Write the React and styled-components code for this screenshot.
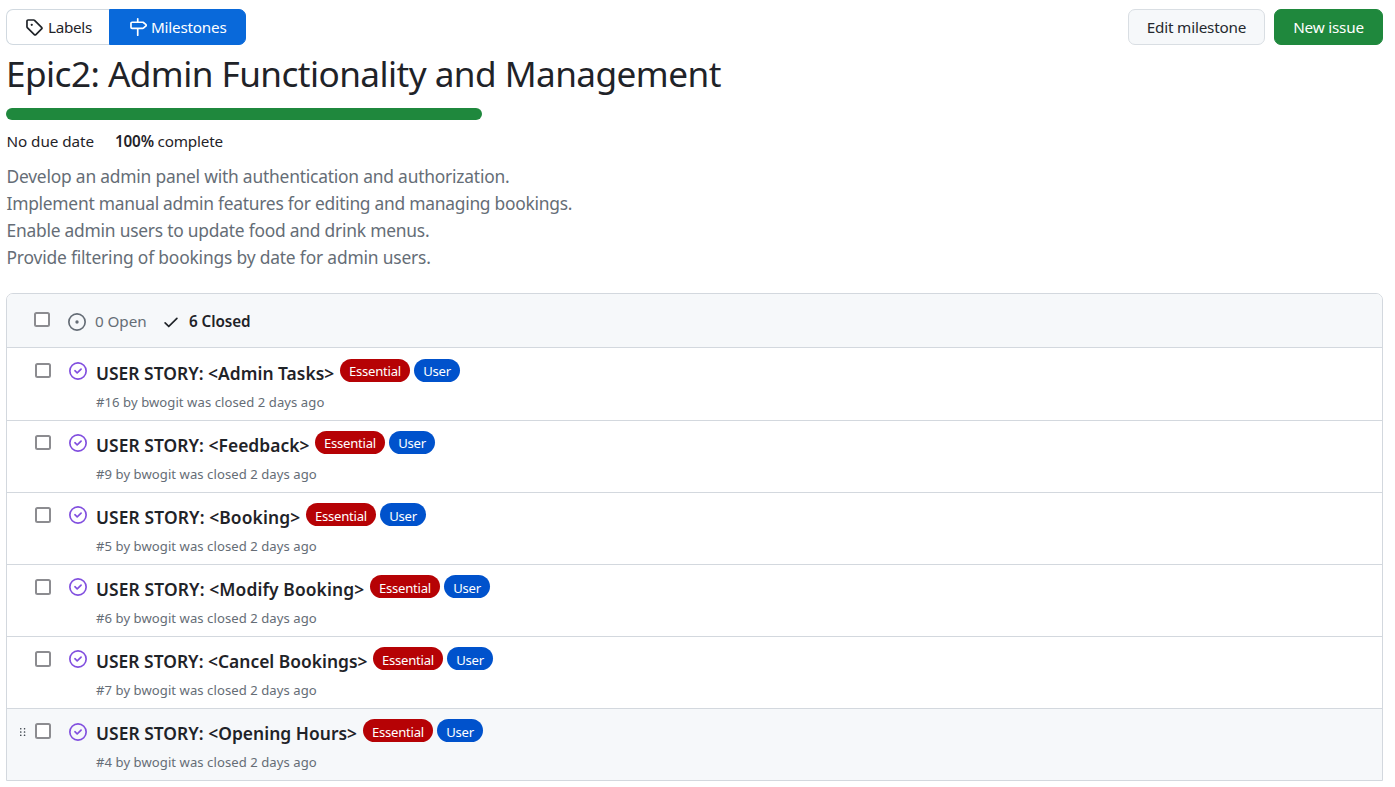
import React from 'react';
import styled, { createGlobalStyle } from 'styled-components';

const GlobalStyle = createGlobalStyle`
  *, *::before, *::after { box-sizing: border-box; }
  body {
    margin: 0;
    background: #ffffff;
    color: #1f2328;
    font-family: "Segoe UI", "Noto Sans", sans-serif;
    font-size: 15.25px;
    line-height: 24px;
  }
  h1, p { margin: 0; font-weight: 400; }
`;

const Page = styled.main`
  width: 1395px;
  height: 787px;
  padding: 9px 12px 0 6px;
  overflow: hidden;
`;

const Toolbar = styled.div`
  display: flex;
  justify-content: space-between;
  height: 36px;
`;

const SubNav = styled.nav`
  display: flex;
`;

const NavItem = styled.a`
  display: flex;
  align-items: center;
  gap: ${(p) => (p.$selected ? '4px' : '5px')};
  width: ${(p) => (p.$selected ? '137px' : '103px')};
  padding-left: ${(p) => (p.$selected ? '19px' : '18px')};
  border: 1px solid ${(p) => (p.$selected ? '#0969da' : '#d1d9e0')};
  border-right-width: ${(p) => (p.$selected ? '1px' : '0')};
  border-radius: ${(p) => (p.$selected ? '0 7px 7px 0' : '7px 0 0 7px')};
  background: ${(p) => (p.$selected ? '#0969da' : '#ffffff')};
  color: ${(p) => (p.$selected ? '#ffffff' : '#1f2328')};
  letter-spacing: ${(p) => p.$tracking}px;
  white-space: nowrap;
`;

const Actions = styled.div`
  display: flex;
  gap: 9px;
`;

const Button = styled.button`
  width: ${(p) => (p.$primary ? '109px' : '137px')};
  padding: 0;
  border: 1px solid ${(p) => (p.$primary ? '#1f883d' : '#d9dee3')};
  border-radius: 7px;
  background: ${(p) => (p.$primary ? '#1f883d' : '#f6f8fa')};
  color: ${(p) => (p.$primary ? '#ffffff' : '#25292e')};
  font: inherit;
  letter-spacing: ${(p) => p.$tracking}px;
  white-space: nowrap;
`;

const Title = styled.h1`
  height: 63px;
  padding-top: 3px;
  font-size: 35.2px;
  line-height: 50px;
  letter-spacing: -0.57px;
  white-space: nowrap;
`;

const Progress = styled.div`
  width: 476px;
  height: 12px;
  border-radius: 6px;
  background: #1f883d;
`;

const Stats = styled.div`
  display: flex;
  height: 43px;
  padding-top: 9px;
`;

const DueDate = styled.span`
  width: 109px;
  padding-left: 0.5px;
  letter-spacing: -0.06px;
`;

const Complete = styled.span`
  letter-spacing: -0.18px;
  b { font-weight: 600; }
`;

const Description = styled.div`
  height: 130px;
  padding-left: 0.5px;
  color: #656d76;
  font-size: 17.4px;
  line-height: 27px;
`;

const DescriptionLine = styled.p`
  letter-spacing: ${(p) => p.$tracking}px;
  white-space: nowrap;
`;

const IssueBox = styled.section`
  border: 1px solid #d3d8de;
  border-radius: 7px 7px 0 0;
  overflow: hidden;
`;

const BoxHeader = styled.header`
  display: flex;
  height: 54px;
  padding: 0 0 0 27px;
  border-bottom: 1px solid #d3d8de;
  background: #f6f8fa;
`;

const Checkbox = styled.span`
  flex: none;
  width: 16px;
  height: ${(p) => (p.$tall ? 16 : 15)}px;
  margin-top: ${(p) => p.$top}px;
  border: 2px solid #8c8c90;
  border-radius: 2.5px;
  background: #ffffff;
`;

const StateFilter = styled.a`
  display: flex;
  align-items: center;
  gap: 9px;
  margin-left: 18px;
  padding-top: 2px;
  color: ${(p) => (p.$selected ? '#1f2328' : '#656d76')};
  font-weight: ${(p) => (p.$selected ? 600 : 400)};
  letter-spacing: ${(p) => p.$tracking}px;
  width: ${(p) => (p.$selected ? 'auto' : '76px')};
  white-space: nowrap;
`;

const FilterText = styled.span`
  padding-bottom: 2px;
`;

const Row = styled.article`
  display: flex;
  height: ${(p) => (p.$first ? 73 : p.$last ? 71 : 72)}px;
  padding-left: 12px;
  border-bottom: ${(p) => (p.$last ? '0' : '1px solid #d3d8de')};
  background: ${(p) => (p.$active ? '#f6f8fa' : '#ffffff')};
`;

const Handle = styled.span`
  flex: none;
  display: flex;
  width: 16px;
  padding: 19px 0 0 1px;
  color: #454c54;
`;

const StateIcon = styled.span`
  flex: none;
  display: flex;
  width: 45px;
  padding: ${(p) => p.$top}px 0 0 18px;
  color: #8250df;
`;

const IssueBody = styled.div`
  padding-top: ${(p) => (p.$first ? 11 : 10)}px;
`;

const TitleLine = styled.div`
  display: flex;
  height: 31px;
`;

const IssueTitle = styled.a`
  width: ${(p) => p.$width}px;
  padding-top: 1px;
  font-size: 17.4px;
  font-weight: 600;
  line-height: 27px;
  letter-spacing: ${(p) => p.$tracking}px;
  white-space: nowrap;
`;

const Label = styled.span`
  width: ${(p) => (p.$kind === 'essential' ? 70 : 46)}px;
  height: 23px;
  margin-right: 4px;
  border-radius: 12px;
  background: ${(p) => (p.$kind === 'essential' ? '#b60205' : '#0052cc')};
  color: #ffffff;
  font-size: 13.1px;
  line-height: ${(p) => (p.$low ? 26 : 24)}px;
  letter-spacing: -0.25px;
  text-align: center;
`;

const IssueMeta = styled.div`
  color: #656d76;
  font-size: 13.1px;
  line-height: 24px;
  letter-spacing: 0.06px;
  white-space: nowrap;
`;

const paths = {
  tag: 'M1 7.775V2.75C1 1.784 1.784 1 2.75 1h5.025c.464 0 .91.184 1.238.513l6.25 6.25a1.75 1.75 0 0 1 0 2.474l-5.026 5.026a1.75 1.75 0 0 1-2.474 0l-6.25-6.25A1.752 1.752 0 0 1 1 7.775Zm1.5 0c0 .066.026.13.073.177l6.25 6.25a.25.25 0 0 0 .354 0l5.025-5.025a.25.25 0 0 0 0-.354l-6.25-6.25a.25.25 0 0 0-.177-.073H2.75a.25.25 0 0 0-.25.25ZM6 5a1 1 0 1 1 0 2 1 1 0 0 1 0-2Z',
  milestone: 'M7.75 0a.75.75 0 0 1 .75.75V3h3.634c.414 0 .814.147 1.13.414l2.07 1.75a1.75 1.75 0 0 1 0 2.672l-2.07 1.75a1.75 1.75 0 0 1-1.13.414H8.5v5.25a.75.75 0 0 1-1.5 0V10H2.75A1.75 1.75 0 0 1 1 8.25v-3.5C1 3.784 1.784 3 2.75 3H7V.75A.75.75 0 0 1 7.75 0Zm4.384 8.5a.25.25 0 0 0 .161-.06l2.07-1.75a.248.248 0 0 0 0-.38l-2.07-1.75a.25.25 0 0 0-.161-.06H2.75a.25.25 0 0 0-.25.25v3.5c0 .138.112.25.25.25h9.384Z',
  open: 'M8 9.5a1.5 1.5 0 1 0 0-3 1.5 1.5 0 0 0 0 3ZM8 0a8 8 0 1 1 0 16A8 8 0 0 1 8 0ZM1.5 8a6.5 6.5 0 1 0 13 0 6.5 6.5 0 0 0-13 0Z',
  closed: 'M11.28 6.78a.75.75 0 0 0-1.06-1.06L7.25 8.69 5.78 7.22a.75.75 0 0 0-1.06 1.06l2 2a.75.75 0 0 0 1.06 0l3.5-3.5ZM16 8A8 8 0 1 1 0 8a8 8 0 0 1 16 0Zm-1.5 0a6.5 6.5 0 1 0-13 0 6.5 6.5 0 0 0 13 0Z',
  check: 'M13.78 4.22a.75.75 0 0 1 0 1.06l-7.25 7.25a.75.75 0 0 1-1.06 0L2.22 9.28a.751.751 0 0 1 .018-1.042.751.751 0 0 1 1.042-.018L6 10.94l6.72-6.72a.75.75 0 0 1 1.06 0Z',
};

const IconSvg = styled.svg`
  flex: none;
  fill: currentColor;
`;

const Icon = ({ name }) => (
  <IconSvg width="18" height="18" viewBox="0 0 16 16">
    <path d={paths[name]} />
  </IconSvg>
);

const Grip = () => (
  <IconSvg width="6" height="9" viewBox="0 0 6 9">
    {[0, 3.3, 6.6].map((y) => (
      <React.Fragment key={y}>
        <rect x="0" y={y} width="1.5" height="1.5" rx=".4" />
        <rect x="3.8" y={y} width="1.5" height="1.5" rx=".4" />
      </React.Fragment>
    ))}
  </IconSvg>
);

const description = [
  { text: 'Develop an admin panel with authentication and authorization.', tracking: -0.21 },
  { text: 'Implement manual admin features for editing and managing bookings.', tracking: -0.26 },
  { text: 'Enable admin users to update food and drink menus.', tracking: -0.23 },
  { text: 'Provide filtering of bookings by date for admin users.', tracking: -0.18 },
];

const issues = [
  { id: 16, name: 'Admin Tasks', width: 244, tracking: 0.03 },
  { id: 9, name: 'Feedback', width: 219, tracking: 0.06 },
  { id: 5, name: 'Booking', width: 210, tracking: 0.12 },
  { id: 6, name: 'Modify Booking', width: 274, tracking: 0.12 },
  { id: 7, name: 'Cancel Bookings', width: 277, tracking: 0.02 },
  { id: 4, name: 'Opening Hours', width: 267, tracking: 0.04, active: true },
];

export default function App() {
  return (
    <>
      <GlobalStyle />
      <Page>
        <Toolbar>
          <SubNav>
            <NavItem $tracking={-0.3}><Icon name="tag" />Labels</NavItem>
            <NavItem $selected $tracking={-0.22}><Icon name="milestone" />Milestones</NavItem>
          </SubNav>
          <Actions>
            <Button $tracking={-0.18}>Edit milestone</Button>
            <Button $primary $tracking={-0.2}>New issue</Button>
          </Actions>
        </Toolbar>
        <Title>Epic2: Admin Functionality and Management</Title>
        <Progress />
        <Stats>
          <DueDate>No due date</DueDate>
          <Complete><b>100%</b> complete</Complete>
        </Stats>
        <Description>
          {description.map((line) => (
            <DescriptionLine key={line.text} $tracking={line.tracking}>{line.text}</DescriptionLine>
          ))}
        </Description>
        <IssueBox>
          <BoxHeader>
            <Checkbox $top={18} />
            <StateFilter $tracking={-0.08}><Icon name="open" /><FilterText>0 Open</FilterText></StateFilter>
            <StateFilter $selected $tracking={-0.08}><Icon name="check" /><FilterText>6 Closed</FilterText></StateFilter>
          </BoxHeader>
          {issues.map((issue, i) => (
            <Row key={issue.id} $first={i === 0} $last={i === issues.length - 1} $active={issue.active}>
              <Handle>{issue.active && <Grip />}</Handle>
              <Checkbox $top={i > 0 ? 14 : 15} $tall={i > 1} />
              <StateIcon $top={i === 0 || issue.active ? 14 : 13}><Icon name="closed" /></StateIcon>
              <IssueBody $first={i === 0}>
                <TitleLine>
                  <IssueTitle $width={issue.width} $tracking={issue.tracking}>
                    {`USER STORY: <${issue.name}>`}
                  </IssueTitle>
                  <Label $kind="essential" $low={i > 1}>Essential</Label>
                  <Label $kind="user" $low={i > 1}>User</Label>
                </TitleLine>
                <IssueMeta>{`#${issue.id} by bwogit was closed 2 days ago`}</IssueMeta>
              </IssueBody>
            </Row>
          ))}
        </IssueBox>
      </Page>
    </>
  );
}
